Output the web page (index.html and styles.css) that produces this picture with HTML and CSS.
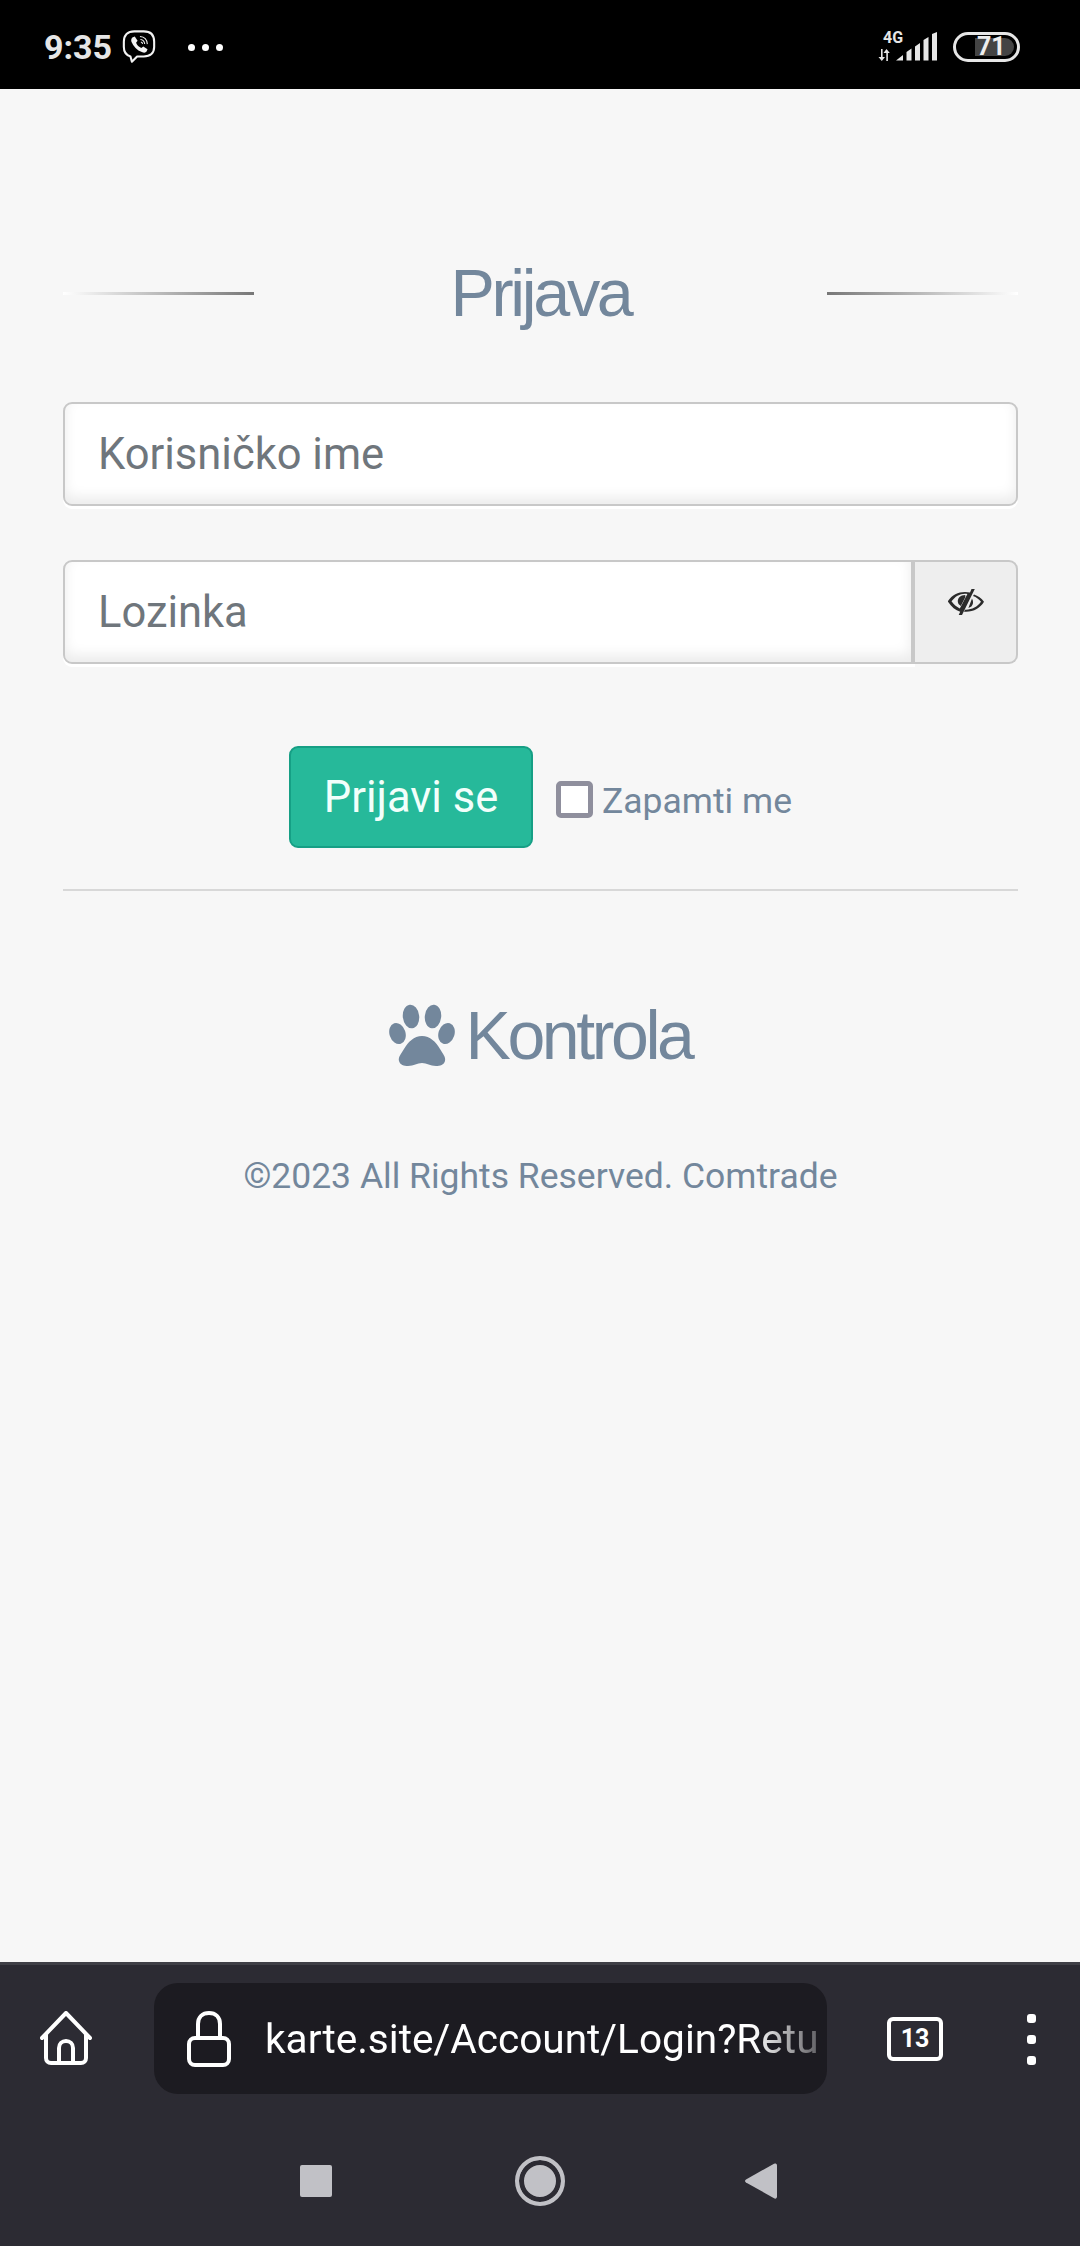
FILE: index.html
```html
<!DOCTYPE html>
<html>
<head>
  <title>Prijava</title>
  <link rel="stylesheet" href="styles.css">
</head>
<body>
  <div class="status-bar">
    <div class="status-left">
      <span class="clock">9:35</span>
      <svg class="viber" width="36" height="37" viewBox="0 0 38 38" fill="none" stroke="#f2f2f2">
        <path d="M10 29.500C5 28 3 25 3 19.500V14C3 7 7 3 14 3h10c7 0 11 4 11 11v5.500C35 26 31 29.500 24 29.500H17L11.500 35z" stroke-width="2.200" stroke-linejoin="round"/>
        <path d="M12 9.500l2.500-1 3 4.500-1.600 2c1 2.500 3 4.500 5.600 5.500l2-1.600 4.500 3-1 2.500c-1 1.500-3 1.500-5 .5-5-2-9-6-11-11-.5-2 0-3.500 1-4.400z" fill="#f2f2f2" stroke="none"/>
        <path d="M20 8.500c4.500.3 7.500 3.500 7.800 8M20.500 11.500c2.500.2 4.300 2 4.500 4.800M21 14.200c1.100.2 1.700.9 1.800 2" stroke-width="1.100"/>
      </svg>
      <div class="dots">
        <span></span><span></span><span></span>
      </div>
    </div>
    <div class="status-right">
      <div class="network">
        <span class="net-label">4G</span>
        <svg width="13" height="12" viewBox="0 0 13 12" fill="#e6e6e6">
          <path d="M3 0h1.600v8H7L3.800 12 .5 8H3zM8.500 0l3.300 4H9.900v8H8.300V4H5.500z"/>
        </svg>
      </div>
      <svg class="signal" width="41" height="29" viewBox="0 0 41 29" fill="#e8e8e8">
        <path d="M0 28.500L7 23v5.500zM10.500 20l5-3.500v12h-5zM19 14.500l5-3.500v17.500h-5zM27.500 8l5-3v23.500h-5zM36 2l5-2v28.500h-5z"/>
      </svg>
      <div class="battery">
        <div class="battery-fill"><span>71</span></div>
      </div>
    </div>
  </div>

  <div class="page">
    <div class="title-row">
      <span class="rule rule-left"></span>
      <h1>Prijava</h1>
      <span class="rule rule-right"></span>
    </div>

    <input class="field" type="text" placeholder="Korisničko ime">

    <div class="password-row">
      <input class="field field-joined" type="password" placeholder="Lozinka">
      <div class="addon">
        <svg width="36" height="26" viewBox="0 0 36 26" fill="#2b2b2b">
          <path d="M0 12C4 6 10 3 17 3c2 0 3.500.2 5 .6L23.500 0h3.300L14 26h-3.300l1.500-3.200C7.500 21.500 3.500 18 0 12.800zM3.500 12.300c2.200 3.200 5 5.500 8.300 7.200l7.600-14.600C18.500 4.800 17.800 4.700 17 4.700c-5.500 0-10 2.800-13.500 7.600z"/>
          <path d="M11.500 8c-1.800 1.500-2.300 4.500-1 7l2.300 2 4.500-8.800V6c-2.500 0-4.500.7-5.800 2z"/>
          <path d="M26 5.500c4 1.500 7.500 3.500 10 7.300-3.500 6-10 10-18 10-.6 0-1.400 0-2-.1l1-2h1c6 0 11.500-3 15-7.900-2-2.500-4.500-4.500-8-5.800zM24 9.500c1.800 3 1.200 6-.6 8l-3 1.500z"/>
        </svg>
      </div>
    </div>

    <div class="actions">
      <button class="submit">Prijavi se</button>
      <label class="remember">
        <input type="checkbox">
        <span>Zapamti me</span>
      </label>
    </div>

    <div class="divider"></div>

    <div class="brand">
      <svg width="66" height="62" viewBox="0 0 66 62" fill="#73879c">
        <ellipse cx="22" cy="12.500" rx="8.200" ry="11.800" transform="rotate(-6 22 12.500)"/>
        <ellipse cx="44" cy="12.500" rx="8.200" ry="11.800" transform="rotate(6 44 12.500)"/>
        <ellipse cx="8.500" cy="29.500" rx="8" ry="10.800" transform="rotate(-18 8.500 29.500)"/>
        <ellipse cx="57.500" cy="29.500" rx="8" ry="10.800" transform="rotate(18 57.500 29.500)"/>
        <path d="M33 32c8 0 14 6 18 13 3 5 6 8 5 12-1 4-5 5-9 5-6 0-9-3-14-3s-8 3-14 3c-4 0-8-1-9-5-1-4 2-7 5-12 4-7 10-13 18-13z"/>
      </svg>
      <span>Kontrola</span>
    </div>

    <p class="copyright">©2023 All Rights Reserved. Comtrade</p>
  </div>

  <div class="browser-bar">
    <div class="toolbar">
      <svg class="home-icon" width="52" height="54" viewBox="0 0 52 54" fill="none" stroke="#fff" stroke-width="4" stroke-linecap="round" stroke-linejoin="round">
        <path d="M2 27L26 2l24 25"/>
        <path d="M6 24v23c0 3 2 5 5 5h30c3 0 5-2 5-5V24"/>
        <path d="M19 52V37c0-4 3-7 7-7s7 3 7 7v15"/>
      </svg>
      <div class="url-box">
        <svg width="44" height="56" viewBox="0 0 44 56" fill="none" stroke="#fff" stroke-width="4">
          <rect x="2" y="27" width="40" height="27" rx="6"/>
          <path d="M11 27V13C11 6 15.500 2 22 2s11 4 11 11v14"/>
        </svg>
        <span class="url-text">karte.site/Account/Login?Retu</span>
      </div>
      <div class="tab-count">13</div>
      <div class="menu-dots">
        <span></span><span></span><span></span>
      </div>
    </div>
    <div class="nav-bar">
      <span class="nav-square"></span>
      <span class="nav-circle"></span>
      <svg width="32" height="36" viewBox="0 0 32 36" fill="#c1c1c6">
        <path d="M30 .5c1 0 2 .5 2 2v31c0 1.500-1 2.500-2.500 2L1 19.500c-1.300-.8-1.300-2.200 0-3L29 .7z"/>
      </svg>
    </div>
  </div>
</body>
</html>
```

FILE: styles.css
```css
* {
  box-sizing: border-box;
}
html, body {
  height: 100%;
}
body {
  margin: 0;
  height: 2246px;
  display: flex;
  flex-direction: column;
  background-color: #f7f7f7;
  font-family: Roboto, sans-serif;
  color: #73879c;
  overflow: hidden;
}

/* phone status bar */
.status-bar {
  height: 89px;
  flex: none;
  background-color: #000;
  display: flex;
  justify-content: space-between;
  padding: 0 60px 0 44px;
}
.status-left {
  display: flex;
  align-items: center;
  padding-top: 4px;
}
.clock {
  color: #e6e6e6;
  font-size: 34px;
  font-weight: 700;
  line-height: 40px;
}
.viber {
  margin-left: 9px;
  margin-top: -1px;
}
.dots {
  display: flex;
  gap: 7px;
  margin-left: 31px;
  margin-top: 2px;
}
.dots span {
  width: 7px;
  height: 7px;
  border-radius: 50%;
  background-color: #fff;
}
.status-right {
  display: flex;
  align-items: flex-start;
  padding-top: 32px;
}
.network {
  width: 25px;
  height: 29px;
  display: flex;
  flex-direction: column;
  align-items: flex-start;
  gap: 5px;
}
.net-label {
  color: #e6e6e6;
  font-size: 16px;
  font-weight: 700;
  line-height: 12px;
  margin-left: 5px;
}
.signal {
  margin-left: -7px;
  margin-right: 16px;
}
.battery {
  width: 67px;
  height: 30px;
  border: 3px solid #e6e6e6;
  border-radius: 15px;
  padding: 3px 3px 3px 19px;
}
.battery-fill {
  height: 100%;
  background-color: #444;
  border-radius: 0 9px 9px 0;
}
.battery-fill span {
  display: block;
  width: 26px;
  margin-left: 2px;
  color: #eee;
  font-size: 25px;
  font-weight: 700;
  line-height: 18px;
}

/* login form */
.page {
  flex: 1;
  padding: 0 62px 0 63px;
}
.title-row {
  display: flex;
  align-items: center;
  justify-content: space-between;
  height: 96px;
  margin-top: 156px;
}
.rule {
  width: 191px;
  height: 3px;
}
.rule-left {
  background: linear-gradient(to right, #fff, #777);
}
.rule-right {
  background: linear-gradient(to left, #fff, #777);
}
h1 {
  margin: 0;
  font-family: "Liberation Sans", Arial, sans-serif;
  font-size: 66.5px;
  font-weight: 400;
  letter-spacing: -0.05em;
  line-height: 96px;
}
.field {
  display: block;
  width: 100%;
  height: 104px;
  margin-top: 61px;
  padding: 0 33px;
  background-color: #fff;
  border: 2px solid #c8c8c8;
  border-radius: 9px;
  box-shadow: 0 3px 0 #fff, inset 0 -7px 13px rgba(0,0,0,0.08);
  font-family: Roboto, sans-serif;
  font-size: 43.5px;
  color: #6f767c;
  outline: none;
}
.field::placeholder {
  color: #6f767c;
  opacity: 1;
}
.password-row {
  display: flex;
  margin-top: 54px;
}
.field-joined {
  flex: 1;
  margin-top: 0;
  border-right: 4px solid #c8c8c8;
  border-radius: 9px 0 0 9px;
}
.addon {
  width: 103px;
  height: 104px;
  display: flex;
  justify-content: center;
  padding-top: 27px;
  background-color: #eee;
  border: 2px solid #c8c8c8;
  border-left: none;
  border-radius: 0 9px 9px 0;
}
.actions {
  display: flex;
  align-items: center;
  justify-content: center;
  margin-top: 82px;
}
.submit {
  width: 244px;
  height: 102px;
  background-color: #26b99a;
  border: 2px solid #169f85;
  border-radius: 9px;
  color: #f2fffb;
  font-family: Roboto, sans-serif;
  font-size: 43.5px;
  padding: 0;
}
.remember {
  display: flex;
  align-items: center;
  margin-left: 23px;
  font-size: 35.5px;
  margin-top: 5px;
}
.remember input {
  appearance: none;
  width: 37px;
  height: 37px;
  margin: 0 9px 0 0;
  background-color: #fff;
  border: 5px solid #8f8f9d;
  border-radius: 5px;
}
.remember span {
  margin-top: 2px;
}
.divider {
  height: 2px;
  margin-top: 41px;
  background-color: #d8d8d8;
}
.brand {
  display: flex;
  align-items: center;
  justify-content: center;
  gap: 10px;
  margin-top: 111px;
  font-family: "Liberation Sans", Arial, sans-serif;
  font-size: 68px;
  letter-spacing: -0.05em;
  line-height: 66px;
}
.copyright {
  margin: 86px 0 0;
  text-align: center;
  font-size: 35.5px;
  line-height: 44px;
}

/* browser toolbar and android nav */
.browser-bar {
  height: 284px;
  flex: none;
  background-color: #2c2b33;
  border-top: 3px solid #3f3f46;
}
.toolbar {
  display: flex;
  align-items: flex-start;
  padding: 18px 0 0 40px;
  height: 132px;
}
.home-icon {
  margin-top: 28px;
}
.url-box {
  width: 673px;
  height: 111px;
  margin-left: 62px;
  padding-left: 33px;
  display: flex;
  align-items: center;
  gap: 34px;
  background-color: #1c1b21;
  border-radius: 24px;
}
.url-text {
  white-space: nowrap;
  color: #fff;
  font-size: 40.6px;
  -webkit-mask-image: linear-gradient(to right, #000 88%, rgba(0,0,0,0.3) 100%);
  mask-image: linear-gradient(to right, #000 88%, rgba(0,0,0,0.3) 100%);
}
.tab-count {
  width: 56px;
  height: 44px;
  margin: 34px 0 0 60px;
  border: 4px solid #fff;
  border-radius: 6px;
  color: #fff;
  font-size: 25px;
  font-weight: 700;
  line-height: 36px;
  text-align: center;
}
.menu-dots {
  display: flex;
  flex-direction: column;
  gap: 12px;
  margin: 31px 0 0 84px;
}
.menu-dots span {
  width: 9px;
  height: 9px;
  border-radius: 3px;
  background-color: #fff;
}
.nav-bar {
  display: flex;
  align-items: center;
  padding-left: 300px;
  height: 100px;
  margin-top: 34px;
}
.nav-square {
  width: 32px;
  height: 32px;
  border-radius: 2px;
  background-color: #c1c1c6;
}
.nav-circle {
  width: 50px;
  height: 50px;
  margin: 0 180px 0 183px;
  border: 4px solid #c1c1c6;
  border-radius: 50%;
  background-color: #c1c1c6;
  box-shadow: inset 0 0 0 5px #2c2b33;
}
```
